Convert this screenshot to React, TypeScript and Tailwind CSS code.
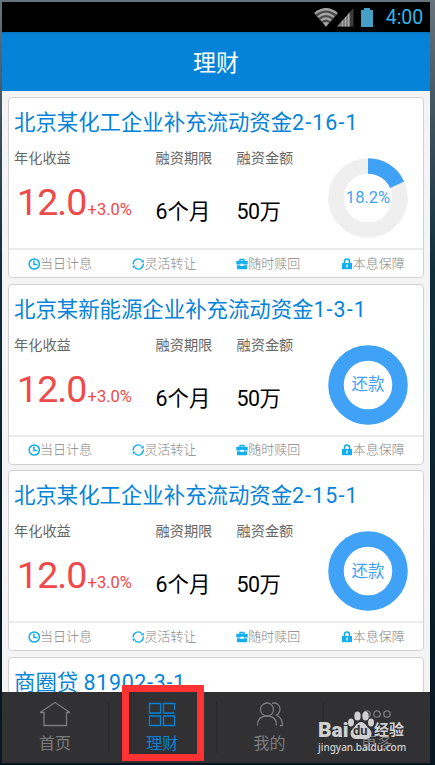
import type { ReactNode } from "react";

interface Product {
  title: string;
  code: string;
  progress: number;
  label: string;
}

const products: Product[] = [
  { title: "北京某化工企业补充流动资金", code: "2-16-1", progress: 0.182, label: "18.2%" },
  { title: "北京某新能源企业补充流动资金", code: "1-3-1", progress: 1, label: "还款" },
  { title: "北京某化工企业补充流动资金", code: "2-15-1", progress: 1, label: "还款" },
];

function StatusBar() {
  return (
    <div className="h-[30px] shrink-0 bg-black flex items-center justify-end pr-[7px]">
      <svg width="24" height="19" viewBox="0 0 24 19" fill="none">
        <path d="M0 5.5Q12-4 24 5.5L12 19Z" fill="#4a4a4a" />
        <path d="M1 5.5Q12-3 23 5.5M4 9Q12 2.5 20 9M7 12.3Q12 8.5 17 12.3" stroke="#a5a5a5" strokeWidth="2.2" />
        <path d="M9 15Q12 12.8 15 15L12 18.5Z" fill="#a5a5a5" />
      </svg>
      <svg width="17" height="19" viewBox="0 0 17 19" className="-ml-px">
        <path d="M0 18.5L16.5 0V18.5Z" fill="#3c3c3c" />
        <path d="M0 18.5L13 4V18.5Z" fill="#777" />
        <path d="M5.5 12.5V18.5M8.5 9.5V18.5M11.5 6V18.5" stroke="#aaa" strokeWidth="1.3" />
      </svg>
      <svg width="12" height="19" viewBox="0 0 12 19" className="ml-[6.5px] mr-px">
        <path d="M3 0H9V2H12V19H0V2H3Z" fill="#469fc6" />
      </svg>
      <span className="ml-[12px] mt-[2px] text-[19.5px] leading-none tracking-[-0.1px] text-[#33b5e5]">4:00</span>
    </div>
  );
}

function ProgressRing({ progress, label }: { progress: number; label: string }) {
  const length = 2 * Math.PI * 32;
  return (
    <div className="size-20 relative flex items-center justify-center">
      <svg viewBox="0 0 80 80" fill="none" className="absolute inset-0 -rotate-90">
        <circle cx="40" cy="40" r="32" stroke="#efefef" strokeWidth="15.5" />
        <circle
          cx="40"
          cy="40"
          r="32"
          stroke="#3fa2f7"
          strokeWidth="15.5"
          strokeDasharray={progress === 1 ? undefined : `${length * progress} ${length}`}
        />
      </svg>
      <span className="relative mt-px text-[16.5px] leading-none text-[#3fa2f7]">{label}</span>
    </div>
  );
}

function Feature({ icon, text }: { icon: ReactNode; text: string }) {
  return (
    <div className="flex w-[104.4px] shrink-0 items-center text-[13px] text-[#858585]">
      {icon}
      <span className="font-light">{text}</span>
    </div>
  );
}

function Features() {
  return (
    <div className="flex h-[29px] items-center overflow-hidden border-t-2 border-[#ebebeb] pl-[18.5px]">
      <Feature
        text="当日计息"
        icon={
          <svg width="12.5" height="12" viewBox="0 0 12 12" fill="none" stroke="#13aeed" strokeWidth="1.5">
            <circle cx="6" cy="6" r="5.1" />
            <path d="M5.7 2.5V6.5H9" />
          </svg>
        }
      />
      <Feature
        text="灵活转让"
        icon={
          <svg width="12.5" height="12" viewBox="0 0 12 12" fill="none" stroke="#13aeed" strokeWidth="1.4">
            <path d="M1 6.5A5 5 0 0 1 9.500 2.400M11 5.500A5 5 0 0 1 2.500 9.600" />
            <path d="M8.300 4.200L11.700 4.600L11.300 1.400ZM3.700 7.800L.3 7.400L.7 10.600Z" fill="#13aeed" stroke="none" />
          </svg>
        }
      />
      <Feature
        text="随时赎回"
        icon={
          <svg width="12" height="12" viewBox="0 0 12 12">
            <path d="M4 3V1.5H8V3" fill="none" stroke="#13aeed" strokeWidth="1.3" />
            <path d="M.3 2.8H11.7V6.5H7.5V5.8H4.5V6.5H.3ZM1 7.2H4.5V8H7.5V7.2H11V11.2H1Z" fill="#13aeed" />
          </svg>
        }
      />
      <Feature
        text="本息保障"
        icon={
          <svg width="12" height="12" viewBox="0 0 12 12">
            <path d="M3.5 6V3.5A2.5 2.5 0 0 1 8.5 3.5V6" fill="none" stroke="#13aeed" strokeWidth="1.6" />
            <path d="M1 5H11V11.2H1Z" fill="#13aeed" />
            <path d="M6 6.5V9.5" stroke="white" strokeWidth="1.3" />
          </svg>
        }
      />
    </div>
  );
}

function CardTitle({ title, code }: { title: string; code: string }) {
  return (
    <h2 className="pl-[5px] pt-[10px] text-[21.4px] leading-[30px] text-[#0583d9] whitespace-nowrap">
      {title}
      <span className={code.length > 6 ? "tracking-[0.7px]" : "tracking-[1.1px]"}>{code}</span>
    </h2>
  );
}

function ProductCard({ title, code, progress, label }: Product) {
  return (
    <div className="h-[181px] shrink-0 flex flex-col rounded-[4px] border border-[#d2d2d2] bg-white">
      <CardTitle title={title} code={code} />
      <div className="flex flex-1 pl-[5px]">
        <div className="w-[141.5px]">
          <div className="mt-[10px] text-[14.2px] leading-5 text-[#666]">年化收益</div>
          <div className="ml-[3px] mt-[12px] flex items-baseline leading-[44px] text-[#ee4a4a]">
            <span className="text-[37.5px] tracking-[-0.9px]">12.0</span>
            <span className="ml-px text-[16.5px]">+3.0%</span>
          </div>
        </div>
        <div className="w-[81px]">
          <div className="mt-[10px] text-[14.2px] leading-5 text-[#666]">融资期限</div>
          <div className="mt-[29px] text-[21.4px] leading-[30px] text-black">6个月</div>
        </div>
        <div className="w-[91.5px]">
          <div className="mt-[10px] text-[14.2px] leading-5 text-[#666]">融资金额</div>
          <div className="mt-[29px] text-[21.4px] leading-[30px] tracking-[-0.5px] text-black">50万</div>
        </div>
        <div className="mt-[20px]">
          <ProgressRing progress={progress} label={label} />
        </div>
      </div>
      <Features />
    </div>
  );
}

function Tab({ icon, text, active = false }: { icon: ReactNode; text: string; active?: boolean }) {
  return (
    <div className={`flex-1 flex flex-col items-center pt-[9px] ${active ? "text-[#0583d9]" : "text-[#7b7b7e]"}`}>
      {icon}
      <span className="mt-[5px] text-[16px] leading-6">{text}</span>
    </div>
  );
}

function Divider() {
  return <div className="my-[10px] w-px bg-[#29292b]" />;
}

function TabBar() {
  return (
    <nav className="flex h-[71px] shrink-0 bg-[#313133]">
      <Tab
        text="首页"
        icon={
          <svg width="32" height="26" viewBox="0 0 32 26" fill="none" stroke="currentColor" strokeWidth="1.3">
            <path d="M1 11.5L16 1.5L31 11.5M1 11.5H5V24.5H27.5V11.5H31" />
          </svg>
        }
      />
      <Divider />
      <Tab
        text="理财"
        active
        icon={
          <svg width="28" height="26" viewBox="0 0 28 26" fill="none" stroke="currentColor" strokeWidth="1.3">
            <path d="M1.500 2.500H12.500V12H1.500ZM26.500 9V2.500H15.500V12H26.500M1.500 15H12.500V24.500H1.500ZM26.500 15H15.500V24.500H26.500Z" />
          </svg>
        }
      />
      <Divider />
      <Tab
        text="我的"
        icon={
          <svg width="28" height="26" viewBox="0 0 28 26" fill="none" stroke="currentColor" strokeWidth="1.3">
            <circle cx="11" cy="8.5" r="6.5" />
            <path d="M1.5 24.5C1.5 18.5 5 15 11 15S20.5 18.5 20.5 24.5M16 2.3C20.5 1 24 4 24 8C24 11 22.5 13 20.5 14C24.5 16 26.5 19 26.5 24.5H24" />
          </svg>
        }
      />
      <Divider />
      <Tab
        text="更多"
        icon={
          <svg width="28" height="26" viewBox="0 0 28 26" fill="none" stroke="currentColor" strokeWidth="1.3">
            <circle cx="4" cy="13" r="3.2" />
            <circle cx="14" cy="13" r="3.2" />
            <circle cx="24" cy="13" r="3.2" />
          </svg>
        }
      />
    </nav>
  );
}

function Watermark() {
  return (
    <div className="absolute left-[318px] top-[711px] w-[92px] text-[#d0d0d1]">
      <div className="flex h-[29px] items-end">
        <span className="w-[30px] translate-y-px text-[21px] leading-[21px] font-black">Bai</span>
        <div className="relative h-[29px] w-[26px]">
          <svg width="26" height="29" viewBox="0 0 26 29" fill="currentColor">
            <ellipse cx="9.5" cy="5" rx="3.2" ry="4.6" />
            <ellipse cx="17.5" cy="5" rx="3.2" ry="4.6" />
            <ellipse cx="3" cy="11.5" rx="3" ry="4" />
            <ellipse cx="23" cy="11.5" rx="3" ry="4" />
            <path d="M13 11C17 11 18 15 21 17.5C26 22 23 28 18 28H8C2 28 1 21 5 17.5C8 15 9 11 13 11Z" />
          </svg>
          <span className="absolute left-[5px] top-[13px] text-[13px] leading-[14px] font-bold text-[#363638]">du</span>
        </div>
        <span className="text-[15px] leading-[20px] font-bold whitespace-nowrap">经验</span>
      </div>
      <div className="font-['Noto_Sans'] text-[10px] leading-[15px] font-medium whitespace-nowrap">
        jingyan.baidu.com
      </div>
    </div>
  );
}

export default function App() {
  return (
    <div className="relative h-[765px] w-[435px] overflow-hidden bg-linear-to-b from-[#66737c] via-[#102d3b] via-35% to-[#06151f] p-[2px] pr-[5px] font-['Roboto','Noto_Sans_CJK_SC',sans-serif]">
      <div className="flex h-[761px] flex-col overflow-hidden bg-[#f4f4f4]">
        <StatusBar />
        <header className="h-[59px] shrink-0 bg-linear-to-b from-[#0574bd] to-[#0583d9] to-5% text-center text-[23px] leading-[63px] text-white">
          理财
        </header>
        <main className="flex min-h-0 flex-1 flex-col gap-[5.7px] overflow-hidden px-[6px] pt-[6px]">
          {products.map((product) => (
            <ProductCard key={product.code} {...product} />
          ))}
          <div className="h-[181px] shrink-0 rounded-[4px] border border-[#d2d2d2] bg-white">
            <CardTitle title="商圈贷 " code="81902-3-1" />
          </div>
        </main>
        <TabBar />
      </div>
      <div className="absolute left-[122px] top-[685px] h-[76px] w-[82px] border-[7px] border-[#ff3333]" />
      <Watermark />
    </div>
  );
}
